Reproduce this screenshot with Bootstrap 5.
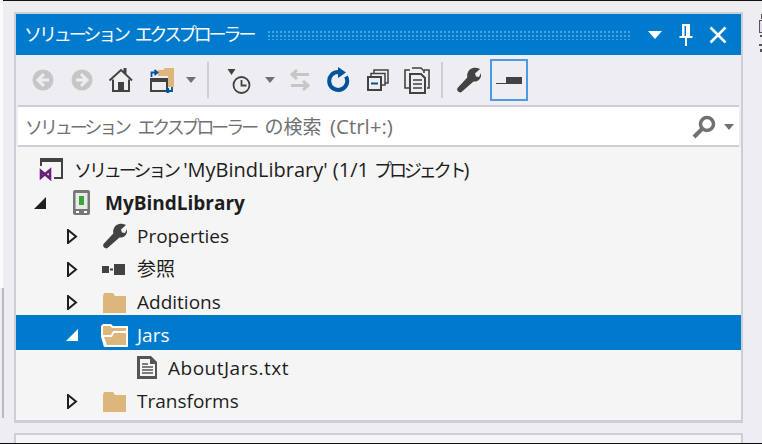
<!DOCTYPE html>
<html lang="ja">
<head>
    <meta charset="UTF-8">
    <title>ソリューション エクスプローラー</title>
    <link href="https://cdn.jsdelivr.net/npm/bootstrap@5.3.3/dist/css/bootstrap.min.css" rel="stylesheet">
    <style>
        html, body { height: 100%; overflow: hidden; }
        body {
            background: #eeeef2;
            border-top: 1px solid #111;
            border-bottom: 1px solid #111;
            font-family: "Open Sans", "Noto Sans CJK JP", sans-serif;
            color: #1e1e1e;
        }
        .sheet { padding: 11px 19px 0 14px; }
        .pane { border: 2px solid #ccced8; border-bottom-width: 3px; }
        .title-bar { height: 41px; background: #007acc; color: #fff; font-size: 18px; padding: 0 14px 0 8px; word-spacing: 2px; }
        .kana { font-size: 18px; letter-spacing: -3.1px; }
        .grip {
            height: 10px;
            background-image: radial-gradient(#4ba3e0 1px, transparent 1.2px);
            background-size: 4px 4px;
        }
        .grip-gap { margin: 0 17px 0 14px; }
        .tool-bar { height: 50px; padding-left: 7.5px; }
        .tool { width: 39px; height: 38px; flex: none; }
        .tool-sm { width: 20px; flex: none; }
        .tool-wide { width: 23px; }
        .tool-wider { width: 22px; }
        .tool-sep { width: 2px; height: 36px; background: #ccced8; margin: 0 6px 0 4px; flex: none; }
        .sep-far { margin: 0 11px 0 4px; }
        .tool-on { width: 38px; height: 42px; margin-left: 2px; border: 2px solid #4a9ae6; }
        .search-box {
            height: 37px;
            margin: 2px 2px 0;
            background: #fff;
            font-size: 19px;
            color: #717171;
            padding: 1px 5px 0 7px;
            box-sizing: content-box;
            border-bottom: 2px solid #ccced8;
            box-shadow: 0 -2px 0 2px #ccced8;
            clip-path: inset(-2px 0 -2px 0);
            word-spacing: 3.5px;
        }
        .ctrl-hint { font-size: 20.5px; }
        .tree { background: #f5f5f5; padding: 6.5px 0 2px; font-size: 19px; }
        .tree-row { height: 33px; white-space: nowrap; }
        .tree-row.picked { background: #007acc; color: #fff; height: 35px; margin-top: -4px; margin-bottom: 2px; padding-top: 6px; }
        .arrow { width: 16px; flex: none; }
        .ico { width: 26px; height: 26px; flex: none; }
        .under-pane { height: 11px; margin-top: 10px; border: 2px solid #ccced8; border-bottom: 0; background: #f5f5f5; }
        .lv0 { padding-left: 22px; gap: 10px; font-size: 20px; }
        .lv1 { padding-left: 16px; }
        .lv2 { padding-left: 48px; }
        .lv3 { padding-left: 118px; }
        .ico-after { margin-left: 21px; }
        .ico-open { width: 29px; margin-left: 20px; }
        .ico-proj { margin-left: 20px; }
        .name-proj { margin-left: 11px; font-weight: 700; }
        .name-gap { margin-left: 10px; }
        .name-open { margin-left: 8px; }
        .name-file { margin-left: 8px; letter-spacing: .5px; }
        .edge-left { position: fixed; left: 0; top: 0; width: 3px; height: 288px; background: #fbfbfc; }
        .edge-left-low { position: fixed; left: 2px; top: 288px; width: 2px; height: 130px; background: #b9b9c4; }
        .edge-right { position: fixed; right: 0; top: 11px; }
    </style>
</head>
<body>
<div class="edge-left"></div>
<div class="edge-left-low"></div>
<svg class="edge-right" width="4" height="42" viewBox="0 0 4 42"><path d="M3 3h1v5H3zM1 9h3v1H2v11h2v1H1zM2 24h2v2H2zM1 33h3v2H1zM2 38h2v3H2z" fill="#555"/><path d="M2 10h2v11H2z" fill="#e4dcec"/></svg>
<div class="sheet">
    <div class="pane">
        <div class="title-bar d-flex align-items-center">
            <span><span class="kana">ソリューション</span> <span class="kana">エクスプローラー</span></span>
            <div class="grip flex-grow-1 grip-gap"></div>
            <svg width="16" height="10" viewBox="0 0 16 10" class="me-3"><path d="M1 1h14L8 9z" fill="#fff"/></svg>
            <svg width="14" height="24" viewBox="0 0 14 24"><path d="M3 1h8v12h2.500v2H8v8H6v-8H.5v-2H3zM5.500 3v10h1.500V3z" fill="#fff" fill-rule="evenodd"/></svg>
            <svg width="18" height="18" viewBox="0 0 18 18" class="ms-3"><path d="M1.500 1.500l15 15M16.500 1.500l-15 15" stroke="#fff" stroke-width="2.500"/></svg>
        </div>
        <div class="tool-bar d-flex align-items-center">
            <div class="tool d-flex align-items-center justify-content-center">
                <svg width="24" height="24" viewBox="0 0 24 24"><circle cx="12" cy="12" r="10.500" fill="#c6c6c6"/><path d="M13 6l-6 6 6 6M7 12h11" fill="none" stroke="#eeeef2" stroke-width="3"/></svg>
            </div>
            <div class="tool d-flex align-items-center justify-content-center">
                <svg width="24" height="24" viewBox="0 0 24 24"><circle cx="12" cy="12" r="10.500" fill="#c6c6c6"/><path d="M11 6l6 6-6 6M17 12H6" fill="none" stroke="#eeeef2" stroke-width="3"/></svg>
            </div>
            <div class="tool d-flex align-items-center justify-content-center">
                <svg width="26" height="26" viewBox="0 0 26 26"><path d="M1.500 13.500L13 3l3.500 3.200V2h1v5.100l6.500 6.400" fill="none" stroke="#424242" stroke-width="2"/><path d="M5 12.500V24h16V12.500" fill="none" stroke="#424242" stroke-width="2"/><rect x="10" y="15" width="6" height="9" fill="#424242"/></svg>
            </div>
            <div class="tool d-flex align-items-center justify-content-center">
                <svg width="28" height="26" viewBox="0 0 28 26"><path d="M12 3h5l2-2h9v19h-6V9H12z" fill="#dcb67a"/><rect x="5" y="12" width="16" height="12" fill="#eeeef2" stroke="#424242" stroke-width="2"/><rect x="5" y="12" width="16" height="3" fill="#424242"/><path d="M5.500 10V5.500h5M8.500 3l3 2.500-3 2.500M26 20v4h-5M23 21.500L20 24l3 2.500" fill="none" stroke="#00539c" stroke-width="1.800"/></svg>
            </div>
            <div class="tool-sm tool-wide d-flex align-items-center justify-content-center">
                <svg width="10" height="6" viewBox="0 0 10 6"><path d="M0 0h10L5 6z" fill="#717171"/></svg>
            </div>
            <div class="tool-sep sep-far"></div>
            <div class="tool d-flex align-items-center justify-content-center">
                <svg width="26" height="28" viewBox="0 0 26 28"><path d="M1.500 3h8L5.500 9z" fill="#424242"/><circle cx="15.500" cy="19" r="8" fill="none" stroke="#424242" stroke-width="1.800"/><path d="M15.500 14v5.500h5" fill="none" stroke="#424242" stroke-width="1.800"/></svg>
            </div>
            <div class="tool-sm tool-wider d-flex align-items-center justify-content-center">
                <svg width="10" height="6" viewBox="0 0 10 6"><path d="M0 0h10L5 6z" fill="#717171"/></svg>
            </div>
            <div class="tool d-flex align-items-center justify-content-center">
                <svg width="22" height="24" viewBox="0 0 22 24"><path d="M8 2L3 6.500 8 11M4 6.500h16M14 13l5 4.500-5 4.500M18 17.500H2" fill="none" stroke="#c6c6c6" stroke-width="3"/></svg>
            </div>
            <div class="tool d-flex align-items-center justify-content-center">
                <svg width="24" height="26" viewBox="0 0 24 26"><path d="M19 9.500A9 9 0 1 1 12 5" fill="none" stroke="#00539c" stroke-width="4"/><path d="M11 0l8 5.500L11 11z" fill="#00539c"/></svg>
            </div>
            <div class="tool d-flex align-items-center justify-content-center">
                <svg width="22" height="22" viewBox="0 0 22 22"><path d="M7 4V1h14v13h-3M4 7.500V4.500h14V16h-3" fill="none" stroke="#424242" stroke-width="1.500"/><rect x="1" y="8" width="13" height="13" fill="#eeeef2" stroke="#424242" stroke-width="2"/><path d="M4 14.500h7" stroke="#00539c" stroke-width="2"/></svg>
            </div>
            <div class="tool d-flex align-items-center justify-content-center">
                <svg width="26" height="28" viewBox="0 0 26 28"><path d="M6 22H1V4h5M20 4h5v18h-2M8 2h9l3 3v2" fill="none" stroke="#424242" stroke-width="1.600"/><path d="M6 8h11l4 4v15H6z" fill="#eeeef2" stroke="#424242" stroke-width="2"/><path d="M9 14h9M9 18h9M9 22h9" stroke="#424242" stroke-width="1.600"/></svg>
            </div>
            <div class="tool-sep"></div>
            <div class="tool d-flex align-items-center justify-content-center">
                <svg width="26" height="26" viewBox="0 0 26 26"><path d="M18 1c4-1 7 1 7 1l-5 4.500 1 3 3 .5 2-4c1 4-2 9-7.500 8.500L6.500 25c-2 1.500-5.500-1.500-4-4l9.800-10.500C11.500 6 14 2 18 1z" fill="#424242"/></svg>
            </div>
            <div class="tool tool-on d-flex align-items-center justify-content-center">
                <svg width="26" height="10" viewBox="0 0 26 10"><path d="M0 8h10V2h16v7H0z" fill="#424242"/></svg>
            </div>
        </div>
        <div class="search-box d-flex align-items-center">
            <span class="flex-grow-1"><span class="kana">ソリューション</span> <span class="kana">エクスプローラー</span> の検索 <span class="ctrl-hint">(Ctrl+:)</span></span>
            <svg width="24" height="24" viewBox="0 0 24 24"><circle cx="15" cy="9" r="6.500" fill="none" stroke="#717171" stroke-width="3.500"/><path d="M10 14l-8 8" stroke="#717171" stroke-width="4"/></svg>
            <svg width="10" height="6" viewBox="0 0 10 6" class="ms-2"><path d="M0 0h10L5 6z" fill="#717171"/></svg>
        </div>
        <div class="tree">
            <div class="tree-row lv0 d-flex align-items-center">
                <svg class="ico" viewBox="0 0 26 26"><path d="M3 9V2h21v19h-8" fill="none" stroke="#424242" stroke-width="2"/><path d="M3 2h21v3H3z" fill="#424242"/><path d="M3 14l9 7.500V13L3 20.500z" fill="none" stroke="#68217a" stroke-width="2.600"/></svg>
                <span><span class="kana">ソリューション</span> 'MyBindLibrary' (1/1 <span class="kana">プロジェクト</span>)</span>
            </div>
            <div class="tree-row lv1 d-flex align-items-center">
                <svg class="arrow" height="12" viewBox="0 0 12 12"><path d="M0 12L12 0v12z" fill="#1e1e1e"/></svg>
                <svg class="ico ico-proj" viewBox="0 0 26 26"><rect x="5" y="0" width="17" height="25" rx="2" fill="#777"/><rect x="7.500" y="3" width="12" height="16" fill="#e6ebe6"/><path d="M11 6h5v9h-5z" fill="#3aa53a"/><path d="M8 21h3v2H8zM16 21h3v2h-3z" fill="#fff"/></svg>
                <span class="name-proj">MyBindLibrary</span>
            </div>
            <div class="tree-row lv2 d-flex align-items-center">
                <svg class="arrow" height="15" viewBox="0 0 10 15"><path d="M1 1l8 6.500L1 14z" fill="none" stroke="#1e1e1e" stroke-width="2"/></svg>
                <svg class="ico ico-after" viewBox="0 0 26 26"><path d="M18 1c4-1 7 1 7 1l-5 4.500 1 3 3 .5 2-4c1 4-2 9-7.500 8.500L6.500 25c-2 1.500-5.500-1.500-4-4l9.800-10.500C11.500 6 14 2 18 1z" fill="#424242"/></svg>
                <span class="name-gap">Properties</span>
            </div>
            <div class="tree-row lv2 d-flex align-items-center">
                <svg class="arrow" height="15" viewBox="0 0 10 15"><path d="M1 1l8 6.500L1 14z" fill="none" stroke="#1e1e1e" stroke-width="2"/></svg>
                <svg class="ico ico-after" viewBox="0 0 26 26"><path d="M1 10h7v7H1zM9 12.500h3v2H9zM13 8h11v11H13z" fill="#424242"/></svg>
                <span class="name-gap">参照</span>
            </div>
            <div class="tree-row lv2 d-flex align-items-center">
                <svg class="arrow" height="15" viewBox="0 0 10 15"><path d="M1 1l8 6.500L1 14z" fill="none" stroke="#1e1e1e" stroke-width="2"/></svg>
                <svg class="ico ico-after" viewBox="0 0 26 26"><path d="M2 7l1-3h9l2 3h11v17H2z" fill="#dcb67a"/></svg>
                <span class="name-gap">Additions</span>
            </div>
            <div class="tree-row picked lv2 d-flex align-items-center">
                <svg class="arrow" height="12" viewBox="0 0 12 12"><path d="M0 12L12 0v12z" fill="#fff"/></svg>
                <svg class="ico ico-open" viewBox="0 0 29 26"><path d="M4 25L1 15V4l2-2h8l2 2h15v21z" fill="#fff"/><path d="M3 14V5l1-1h6l2 2h14v3H13l-2 4H3zM4 15h8l2-4h12v12H7z" fill="#dcb67a"/></svg>
                <span class="name-open">Jars</span>
            </div>
            <div class="tree-row lv3 d-flex align-items-center">
                <svg class="ico" viewBox="0 0 26 26"><path d="M3 1h14l6 6v17H3z" fill="#555"/><path d="M6 4h10v5h5v12H6z" fill="#f5f5f5"/><path d="M8 9h6M8 12h11M8 15h11M8 18h11" stroke="#555" stroke-width="1.600"/></svg>
                <span class="name-file">AboutJars.txt</span>
            </div>
            <div class="tree-row lv2 d-flex align-items-center">
                <svg class="arrow" height="15" viewBox="0 0 10 15"><path d="M1 1l8 6.500L1 14z" fill="none" stroke="#1e1e1e" stroke-width="2"/></svg>
                <svg class="ico ico-after" viewBox="0 0 26 26"><path d="M2 7l1-3h9l2 3h11v17H2z" fill="#dcb67a"/></svg>
                <span class="name-gap">Transforms</span>
            </div>
        </div>
    </div>
    <div class="under-pane"></div>
</div>
</body>
</html>
